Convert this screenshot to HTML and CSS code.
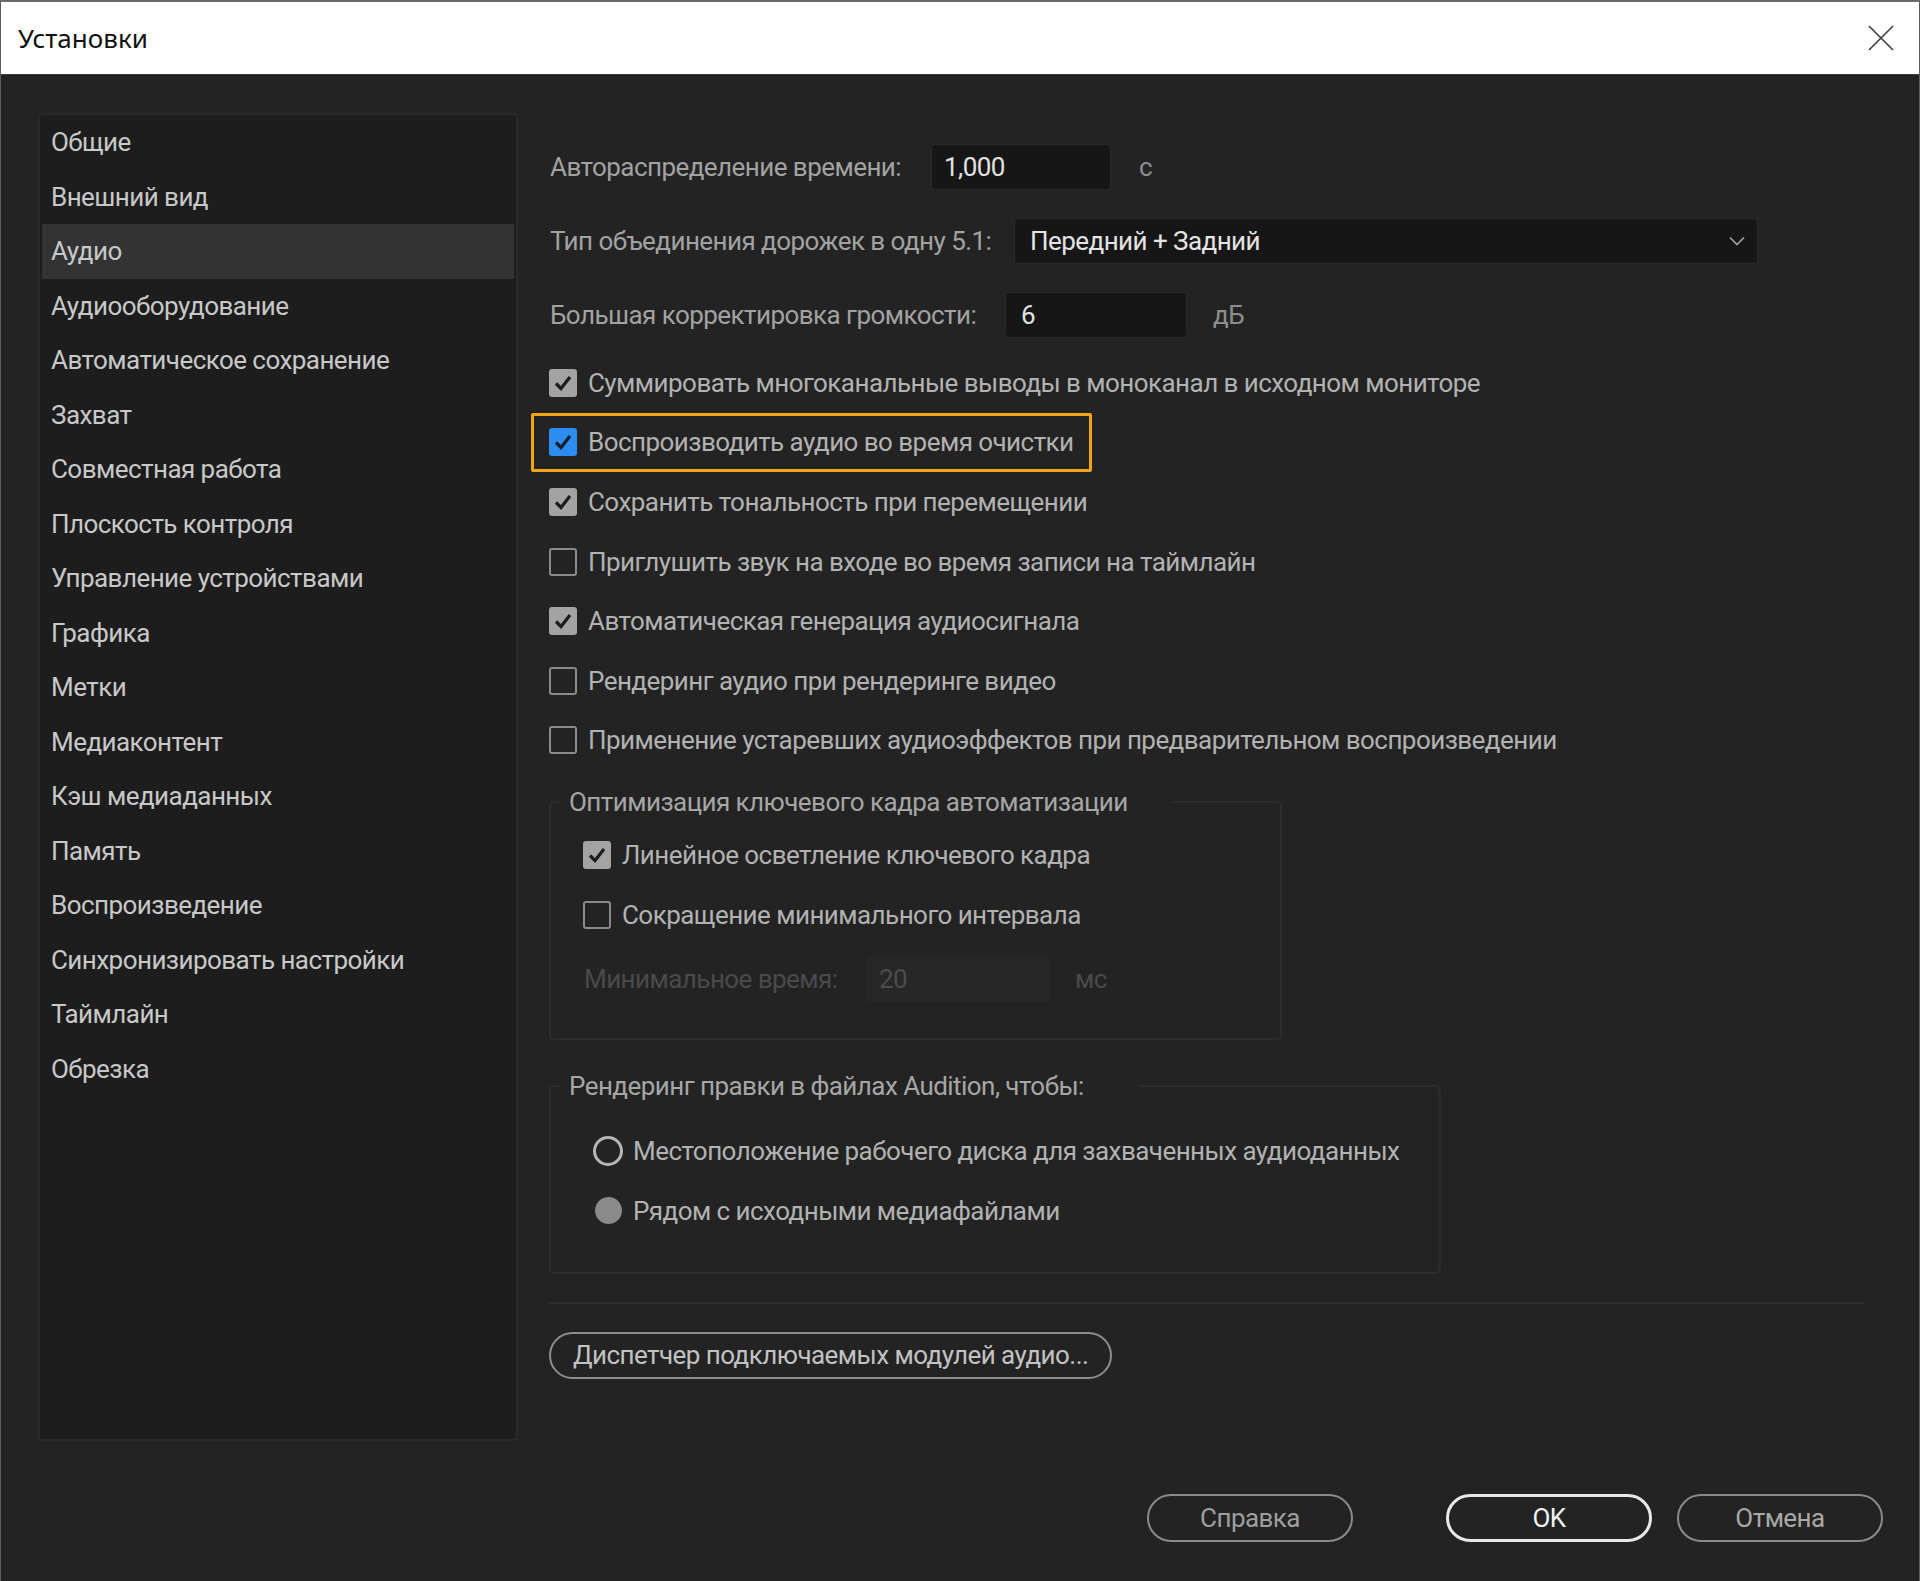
FILE: index.html
```html
<!DOCTYPE html>
<html lang="ru">
<head>
<meta charset="utf-8">
<title>Установки</title>
<link rel="stylesheet" href="styles.css">
</head>
<body>
<div class="window">
  <header class="titlebar">
    <span class="title">Установки</span>
    <span class="close">
      <svg width="26" height="26" viewBox="0 0 26 26"><path d="M1 1 L25 25 M25 1 L1 25" stroke="#3a3a3a" stroke-width="1.6" fill="none"/></svg>
    </span>
  </header>
  <div class="body">
    <nav class="sidebar">
      <div class="nav-item">Общие</div>
      <div class="nav-item">Внешний вид</div>
      <div class="nav-item active">Аудио</div>
      <div class="nav-item">Аудиооборудование</div>
      <div class="nav-item">Автоматическое сохранение</div>
      <div class="nav-item">Захват</div>
      <div class="nav-item">Совместная работа</div>
      <div class="nav-item">Плоскость контроля</div>
      <div class="nav-item">Управление устройствами</div>
      <div class="nav-item">Графика</div>
      <div class="nav-item">Метки</div>
      <div class="nav-item">Медиаконтент</div>
      <div class="nav-item">Кэш медиаданных</div>
      <div class="nav-item">Память</div>
      <div class="nav-item">Воспроизведение</div>
      <div class="nav-item">Синхронизировать настройки</div>
      <div class="nav-item">Таймлайн</div>
      <div class="nav-item">Обрезка</div>
    </nav>
    <main class="main">
      <div class="field-row">
        <span class="lbl lbl-time">Автораспределение времени:</span>
        <span class="input input-time">1,000</span>
        <span class="unit unit-s">с</span>
      </div>
      <div class="field-row">
        <span class="lbl lbl-mix">Тип объединения дорожек в одну 5.1:</span>
        <span class="input select">
          <span>Передний + Задний</span>
          <svg class="chev" width="16" height="10" viewBox="0 0 16 10"><polyline points="1,1.5 8,8.5 15,1.5" fill="none" stroke="#a6a6a6" stroke-width="1.6"/></svg>
        </span>
      </div>
      <div class="field-row">
        <span class="lbl lbl-vol">Большая корректировка громкости:</span>
        <span class="input input-vol">6</span>
        <span class="unit unit-db">дБ</span>
      </div>

      <div class="checks">
        <div class="cb"><span class="box on"><svg width="28" height="28" viewBox="0 0 28 28"><polyline points="7,14.5 12,19.5 21,8" fill="none" stroke="#1c1c1c" stroke-width="3.2"/></svg></span><span class="cb-text">Суммировать многоканальные выводы в моноканал в исходном мониторе</span></div>
        <div class="cb highlight"><span class="box blue"><svg width="28" height="28" viewBox="0 0 28 28"><polyline points="7,14.5 12,19.5 21,8" fill="none" stroke="#14202e" stroke-width="3.2"/></svg></span><span class="cb-text">Воспроизводить аудио во время очистки</span></div>
        <div class="cb"><span class="box on"><svg width="28" height="28" viewBox="0 0 28 28"><polyline points="7,14.5 12,19.5 21,8" fill="none" stroke="#1c1c1c" stroke-width="3.2"/></svg></span><span class="cb-text">Сохранить тональность при перемещении</span></div>
        <div class="cb"><span class="box off"></span><span class="cb-text">Приглушить звук на входе во время записи на таймлайн</span></div>
        <div class="cb"><span class="box on"><svg width="28" height="28" viewBox="0 0 28 28"><polyline points="7,14.5 12,19.5 21,8" fill="none" stroke="#1c1c1c" stroke-width="3.2"/></svg></span><span class="cb-text">Автоматическая генерация аудиосигнала</span></div>
        <div class="cb"><span class="box off"></span><span class="cb-text">Рендеринг аудио при рендеринге видео</span></div>
        <div class="cb"><span class="box off"></span><span class="cb-text">Применение устаревших аудиоэффектов при предварительном воспроизведении</span></div>
      </div>

      <fieldset class="group fs1">
        <legend>Оптимизация ключевого кадра автоматизации</legend>
        <div class="fs-body fs1-body">
          <div class="cb"><span class="box on"><svg width="28" height="28" viewBox="0 0 28 28"><polyline points="7,14.5 12,19.5 21,8" fill="none" stroke="#1c1c1c" stroke-width="3.2"/></svg></span><span class="cb-text">Линейное осветление ключевого кадра</span></div>
          <div class="cb"><span class="box off"></span><span class="cb-text">Сокращение минимального интервала</span></div>
          <div class="field-row disabled-row">
            <span class="lbl lbl-min">Минимальное время:</span>
            <span class="input input-min">20</span>
            <span class="unit unit-ms">мс</span>
          </div>
        </div>
      </fieldset>

      <fieldset class="group fs2">
        <legend>Рендеринг правки в файлах Audition, чтобы:</legend>
        <div class="fs-body fs2-body">
          <div class="rb"><span class="radio empty"></span><span class="cb-text">Местоположение рабочего диска для захваченных аудиоданных</span></div>
          <div class="rb"><span class="radio filled"></span><span class="cb-text">Рядом с исходными медиафайлами</span></div>
        </div>
      </fieldset>

      <div class="sep"></div>

      <div class="pill">Диспетчер подключаемых модулей аудио...</div>
    </main>
  </div>
  <footer class="footer">
    <span class="btn help">Справка</span>
    <span class="btn ok">OK</span>
    <span class="btn cancel">Отмена</span>
  </footer>
</div>
</body>
</html>
```

FILE: styles.css
```css
* { box-sizing: border-box; }
html, body { margin: 0; padding: 0; }
body {
  background: #232323;
  font-family: Roboto, "Noto Sans", sans-serif;
  font-size: 26px;
  letter-spacing: -0.55px;
  color: #b5b5b5;
}
.window {
  height: 1581px;
  display: flex;
  flex-direction: column;
  border-left: 1px solid #5e5e5e;
  border-right: 1px solid #5e5e5e;
  border-top: 2px solid #6a6a6a;
  overflow: hidden;
}
.titlebar {
  height: 73px;
  flex: none;
  background: #ffffff;
  display: flex;
  align-items: center;
  justify-content: space-between;
  padding: 0 25px 0 17px;
  border-bottom: 1px solid #3c3c3c;
}
.title {
  font-family: "Noto Sans", "Open Sans", sans-serif;
  font-size: 26px;
  letter-spacing: 0;
  color: #111;
}
.close { display: flex; }

.body {
  display: flex;
  padding: 38px 0 0 37px;
  height: 1366px;
  flex: none;
}
.sidebar {
  width: 480px;
  height: 1328px;
  flex: none;
  background: #1d1d1d;
  border: 2px solid #2a2a2a;
  border-radius: 4px;
  padding: 0 2px;
}
.nav-item {
  height: 54.5px;
  line-height: 54.5px;
  padding-left: 9px;
  color: #c8c8c8;
  white-space: nowrap;
}
.nav-item.active { background: #333333; }

.main {
  flex: 1;
  margin-left: 31px;
  padding-top: 31px;
  padding-right: 54px;
}
.field-row {
  display: flex;
  align-items: center;
  height: 46px;
}
.field-row + .field-row { margin-top: 28px; }
.lbl { color: #a2a2a2; flex: none; white-space: nowrap; padding-left: 1px; }
.lbl-time { width: 382px; }
.lbl-mix { width: 465px; }
.lbl-vol { width: 456px; }
.input {
  height: 46px;
  flex: none;
  background: #161616;
  border: 1px solid #2a2a2a;
  border-radius: 4px;
  display: flex;
  align-items: center;
  padding-left: 12px;
  color: #e2e2e2;
}
.input-time { width: 180px; }
.input-vol { width: 182px; padding-left: 15px; }
.select {
  width: 744px;
  padding: 0 12px 0 15px;
  justify-content: space-between;
  color: #e4e4e4;
}
.unit { color: #8e8e8e; flex: none; }
.unit-s { margin-left: 28px; }
.unit-db { margin-left: 26px; }

.checks { margin-top: 15px; }
.cb, .rb {
  display: flex;
  align-items: center;
  height: 59.6px;
  width: fit-content;
  position: relative;
}
.box {
  width: 28px;
  height: 28px;
  flex: none;
  border-radius: 3px;
  margin-right: 11px;
  display: flex;
  align-items: center;
  justify-content: center;
}
.box.on { background: #a3a3a3; }
.box.blue { background: #2d8cf0; }
.box.off { border: 2.5px solid #8a8a8a; }
.cb-text { color: #b2b2b2; white-space: nowrap; }
.cb.highlight::after {
  content: "";
  position: absolute;
  left: -18px;
  right: -18px;
  top: 0;
  bottom: 0;
  border: 3px solid #f2a413;
  border-radius: 2px;
}

.group {
  margin: 0;
  border: 2px solid #2d2d2d;
  border-radius: 5px;
  padding: 0;
  min-width: 0;
}
.group legend {
  margin-left: 10px;
  padding: 0 45px 0 8px;
  line-height: 30px;
  color: #a6a6a6;
  white-space: nowrap;
}
.fs1 { width: 733px; margin-top: 17px; }
.fs1-body { padding: 8px 0 36px 32px; }
.fs2 { width: 892px; margin-top: 31px; }
.fs2 legend { padding-right: 55px; }
.fs2-body { padding: 20px 0 31px 42px; }

.disabled-row { margin-top: 12px; }
.disabled-row .lbl { color: #4a4a4a; width: 283px; padding-left: 1px; }
.input-min {
  width: 184px;
  background: #272727;
  border-color: #272727;
  color: #4c4c4c;
}
.unit-ms { margin-left: 25px; color: #4a4a4a; }

.radio {
  width: 30px;
  height: 30px;
  flex: none;
  border-radius: 50%;
  margin-right: 10px;
}
.radio.empty { border: 3px solid #b6b6b6; }
.radio.filled { background: #8a8a8a; width: 27px; height: 27px; margin-left: 2px; margin-right: 11px; }

.sep {
  margin-top: 28px;
  height: 2px;
  background: #2e2e2e;
}
.pill {
  margin-top: 28px;
  width: 563px;
  height: 47px;
  border: 2px solid #8e8e8e;
  border-radius: 24px;
  display: flex;
  align-items: center;
  padding-left: 22px;
  color: #c2c2c2;
  white-space: nowrap;
}

.footer {
  flex: 1;
  display: flex;
  justify-content: flex-end;
  align-items: flex-start;
  padding: 53px 36px 0 0;
}
.btn {
  width: 206px;
  height: 48px;
  border-radius: 24px;
  border: 2px solid #8a8a8a;
  color: #9e9e9e;
  display: flex;
  align-items: center;
  justify-content: center;
}
.btn.help { margin-right: 93px; }
.btn.ok { border: 3px solid #e8e8e8; color: #f2f2f2; margin-right: 25px; }
.btn.cancel { color: #a8a8a8; }
```
